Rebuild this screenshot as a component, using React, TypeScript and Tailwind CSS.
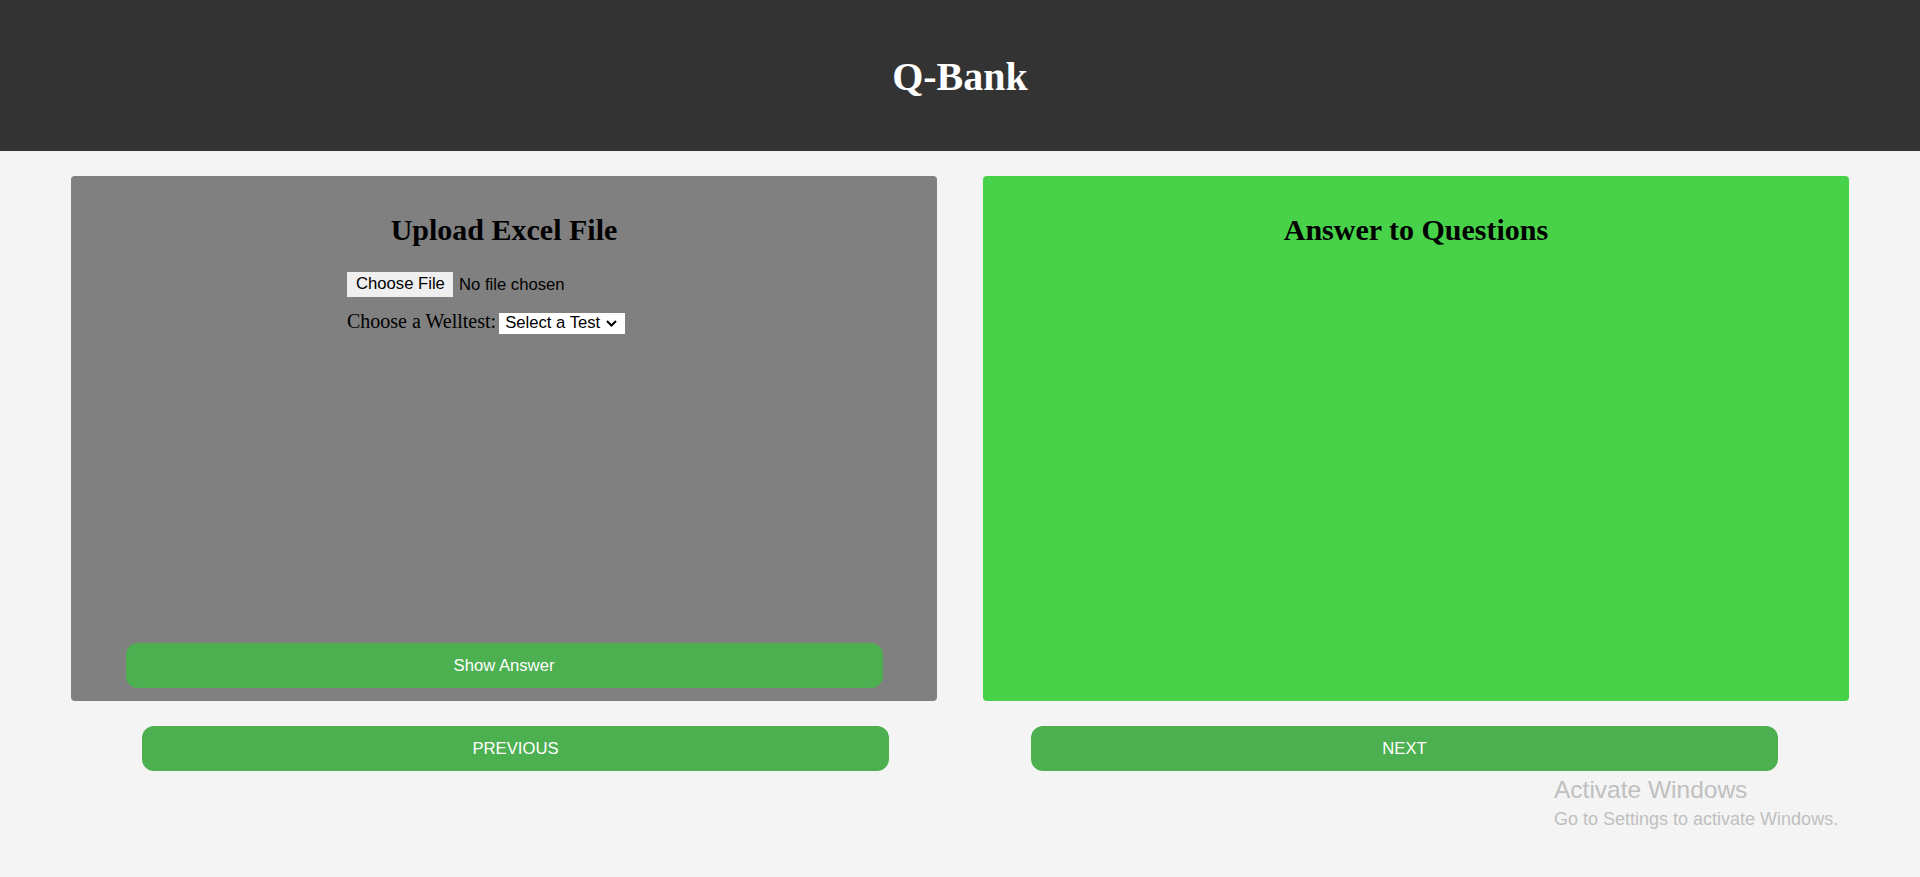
import React from "react";

const serif = "font-['Liberation_Serif','Times_New_Roman',serif]";
const sans = "font-['Liberation_Sans',Arial,sans-serif]";

function Chevron() {
  return (
    <svg width="11" height="7" viewBox="0 0 11 7" className="ml-[6px]">
      <path d="M1 1 L5.5 5.5 L10 1" fill="none" stroke="#000" strokeWidth="2" />
    </svg>
  );
}

export default function App() {
  return (
    <div className={`relative min-h-screen bg-[#f4f4f4] ${serif}`}>
      <header className="h-[151px] bg-[#333333] flex items-center justify-center pt-[2px]">
        <h1 className="text-[40px] leading-[46px] font-bold text-white">Q-Bank</h1>
      </header>

      <main className="pt-[25px] flex justify-center gap-[46px]">
        <section className="w-[866px] h-[525px] bg-[#808080] rounded-[4px] flex flex-col">
          <h2 className="pt-[37px] text-center text-[30px] leading-[34px] font-bold text-black">
            Upload Excel File
          </h2>
          <div className="ml-[276px] mt-[25px] flex flex-col">
            <div className={`flex items-center h-[25px] ${sans} text-[16.67px] text-black`}>
              <span className="h-[25px] w-[106px] bg-[#efefef] flex items-center pl-[9px] leading-none">
                Choose File
              </span>
              <span className="ml-[6px]">No file chosen</span>
            </div>
            <div className="mt-[9px] flex items-baseline gap-[3px]">
              <span className="text-[20px] text-black">Choose a Welltest:</span>
              <span
                className={`h-[21px] w-[126px] bg-white flex items-center pl-[6px] ${sans} text-[16.67px] text-black leading-none`}
              >
                Select a Test
                <Chevron />
              </span>
            </div>
          </div>
          <button
            className={`mt-auto mb-[13px] mx-auto w-[757px] h-[45px] rounded-[12px] bg-[#4caf50] text-white ${sans} text-[16.67px]`}
          >
            Show Answer
          </button>
        </section>

        <section className="w-[866px] h-[525px] bg-[#47d24a] rounded-[4px] flex flex-col">
          <h2 className="pt-[37px] text-center text-[30px] leading-[34px] font-bold text-black">
            Answer to Questions
          </h2>
        </section>
      </main>

      <div className="mt-[25px] flex justify-evenly">
        <button
          className={`w-[747px] h-[45px] rounded-[12px] bg-[#4caf50] text-white ${sans} text-[16.67px]`}
        >
          PREVIOUS
        </button>
        <button
          className={`w-[747px] h-[45px] rounded-[12px] bg-[#4caf50] text-white ${sans} text-[16.67px]`}
        >
          NEXT
        </button>
      </div>

      <div className={`absolute left-[1554px] top-[776px] ${sans} text-[#c0c0c0] pointer-events-none`}>
        <div className="text-[24.5px] leading-[28px] font-light">Activate Windows</div>
        <div className="mt-[5px] text-[18px] leading-[20px]">Go to Settings to activate Windows.</div>
      </div>
    </div>
  );
}
